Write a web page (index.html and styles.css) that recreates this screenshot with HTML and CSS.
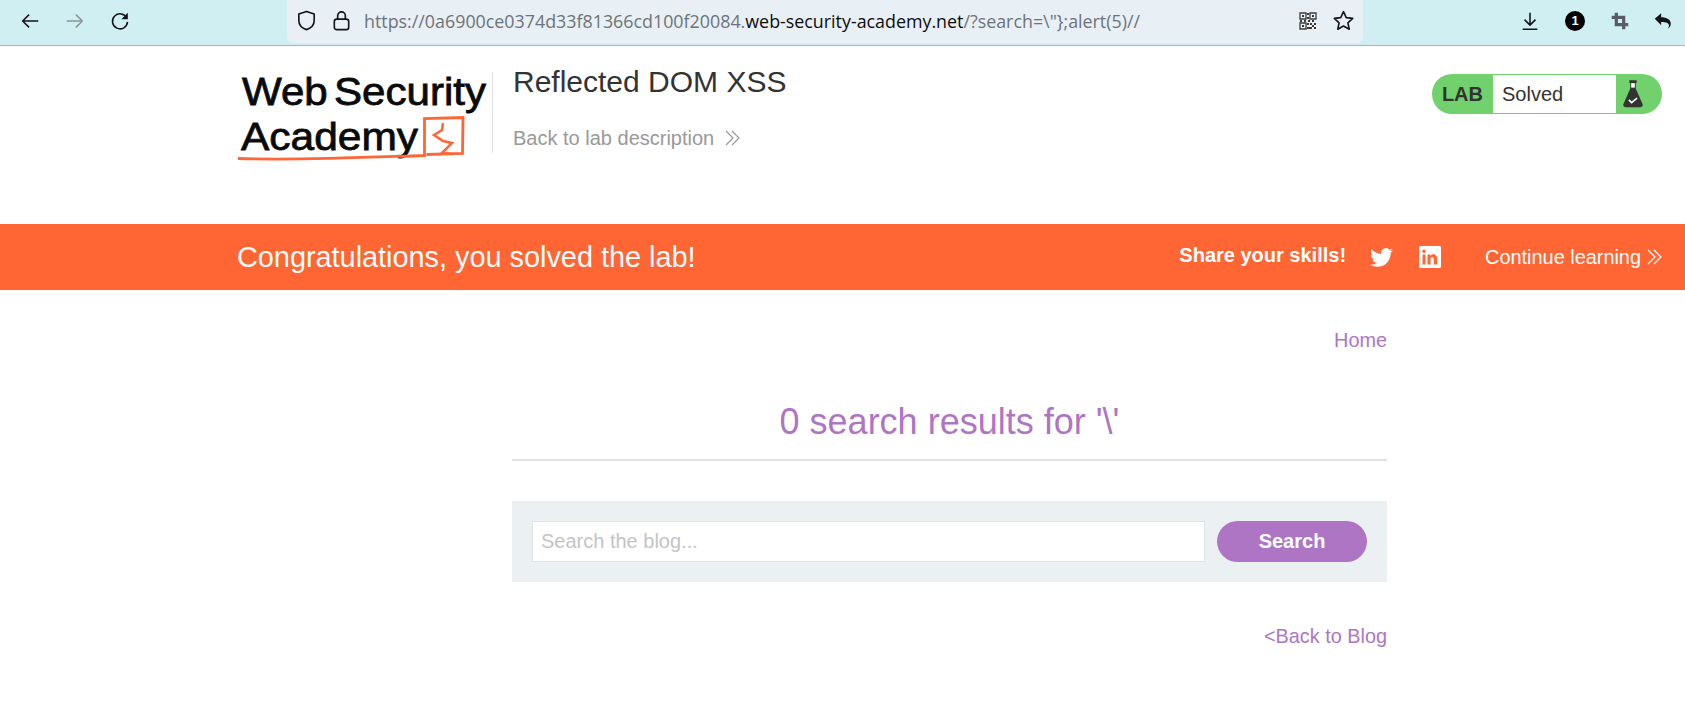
FILE: index.html
```html
<!DOCTYPE html>
<html lang="en">
<head>
<meta charset="utf-8">
<title>Reflected DOM XSS</title>
<link rel="stylesheet" href="styles.css">
</head>
<body>
<div class="toolbar">
  <div class="nav">
    <svg class="ic" viewBox="0 0 24 24"><path d="M21 12H4M11 5l-7 7 7 7" class="st dark"/></svg>
    <svg class="ic" viewBox="0 0 24 24"><path d="M3 12h17M13 5l7 7-7 7" class="st grey"/></svg>
    <svg class="ic" viewBox="0 0 24 24"><path d="M19.5 9A8.2 8.2 0 1 0 20.2 13" class="st dark"/><path d="M20.5 3v7h-7z" class="fill-dark"/></svg>
  </div>
  <div class="urlbar">
    <svg class="ic-s" viewBox="0 0 24 24"><path d="M12 2.5l8 2.8v7c0 4.5-3.3 7.6-8 9.2-4.700-1.600-8-4.700-8-9.200v-7z" class="st dark"/></svg>
    <svg class="ic-s" viewBox="0 0 24 24"><rect x="4.500" y="10.500" width="15" height="11" rx="2.500" class="st dark"/><path d="M8 10.500V7a4 4 0 0 1 8 0v3.500" class="st dark"/></svg>
    <div class="url"><span class="u-dim">https://0a6900ce0374d33f81366cd100f20084.</span><span class="u-main">web-security-academy.net</span><span class="u-dim">/?search=\"};alert(5)//</span></div>
    <svg class="ic-q" viewBox="0 0 18 18"><path d="M1 1h6v6H1zM11 1h6v6h-6zM1 11h6v6H1z" class="st-thin"/><path d="M3 3h2v2H3zM13 3h2v2h-2zM3 13h2v2H3zM8 1h2v2H8zM8 5h2v2H8zM1 8h2v2H1zM5 8h2v2H5zM9 8h2v2H9zM13 8h2v2h-2zM8 11h2v2H8zM11 11h2v2h-2zM15 11h2v2h-2zM13 13h2v2h-2zM8 15h3v2H8zM15 15h2v2h-2zM11 15h2v2h-2z" class="fill-mid"/></svg>
    <svg class="ic-s star" viewBox="0 0 24 24"><path d="M12 2.800l2.900 6.200 6.700.800-5 4.600 1.400 6.700-6-3.400-6 3.400 1.400-6.700-5-4.600 6.700-.800z" class="st dark"/></svg>
  </div>
  <div class="tools">
    <svg class="ic" viewBox="0 0 24 24"><path d="M12 3v13M6 10.500l6 6 6-6M4 21h16" class="st dark"/></svg>
    <div class="count">1</div>
    <svg class="ic crop" viewBox="0 0 24 24"><path d="M8 3v13h13M3 8h13v13" class="st-crop"/></svg>
    <svg class="ic" viewBox="0 0 24 24"><path d="M3 9.500L10 3.500v4.300c6 0 10.500 2.500 10.500 7.200 0 2.300-1.300 4.300-3.500 5.500 1-1.500 1.500-2.500 1.500-3.700 0-2.700-3.200-3.800-8.500-3.800V16.500z" class="fill-dark"/></svg>
  </div>
</div>

<header class="lab-header">
  <svg class="logo" viewBox="236 66 256 100">
    <text x="242" y="105" class="logo-text" textLength="244" lengthAdjust="spacingAndGlyphs">Web Security</text>
    <text x="241" y="150" class="logo-text" textLength="177" lengthAdjust="spacingAndGlyphs">Academy</text>
    <path d="M238 158.500c60 2 125-1 186.500-3V118.500l38.500-1-.5 36-36 1" class="logo-line"/>
    <path d="M443 123l-1 7-8 5 9 6 9 2-10 10 10 1" class="logo-bolt"/>
  </svg>
  <div class="head-title">
    <h2 class="lab-name">Reflected DOM XSS</h2>
    <a class="back-desc">Back to lab description
      <svg class="chev" viewBox="0 0 15 16"><path d="M1 1l7 7-7 7M7 1l7 7-7 7" class="chev-grey"/></svg>
    </a>
  </div>
  <div class="badge">
    <span class="badge-lab">LAB</span>
    <span class="badge-state">Solved</span>
    <span class="badge-icon">
      <svg class="flask" viewBox="0 0 22 32"><path d="M7 1h8v3h-1v6l7.500 17c.6 1.800-.5 3.500-2.500 3.500H3c-2 0-3.100-1.700-2.500-3.500L8 10V4H7z" class="flask-body"/><path d="M9 4h4v5H9z" class="flask-neck"/><path d="M6.500 22.500l3 3 6-5" class="flask-check"/></svg>
    </span>
  </div>
</header>

<section class="banner">
  <h4 class="congrats">Congratulations, you solved the lab!</h4>
  <div class="share">
    <span class="share-text">Share your skills!</span>
    <svg class="tw" viewBox="0 0 24 24"><path d="M23.950 4.570a10 10 0 0 1-2.820.77 4.960 4.960 0 0 0 2.160-2.720c-.950.550-2 .950-3.130 1.180a4.920 4.920 0 0 0-8.380 4.480C7.690 8.100 4.070 6.130 1.640 3.160a4.820 4.820 0 0 0-.66 2.480c0 1.710.87 3.210 2.190 4.100a4.900 4.900 0 0 1-2.230-.62v.06a4.920 4.920 0 0 0 3.950 4.830 5 5 0 0 1-2.210.08 4.940 4.940 0 0 0 4.600 3.420A9.870 9.870 0 0 1 0 19.540a14 14 0 0 0 7.560 2.210c9.050 0 14-7.500 14-13.980 0-.21 0-.42-.02-.63a9.940 9.940 0 0 0 2.410-2.570z" class="fill-white"/></svg>
    <svg class="li" viewBox="0 0 22 22"><path fill-rule="evenodd" d="M1.500 0h19A1.500 1.500 0 0 1 22 1.500v19a1.500 1.500 0 0 1-1.500 1.500h-19A1.500 1.500 0 0 1 0 20.500v-19A1.500 1.500 0 0 1 1.500 0zM3.500 8.500v10h3v-10zM5 3.500a1.800 1.800 0 1 0 0 3.600 1.800 1.800 0 0 0 0-3.600zM8.500 8.500v10h3v-5.200c0-3 3.300-3 3.300 0v5.200h3.200v-6c0-5-4.800-5-6.500-2.500V8.500z" class="fill-white"/></svg>
    <a class="continue">Continue learning
      <svg class="chev" viewBox="0 0 15 16"><path d="M1 1l7 7-7 7M7 1l7 7-7 7" class="chev-white"/></svg>
    </a>
  </div>
</section>

<main class="content">
  <nav class="home-row"><a class="link">Home</a></nav>
  <h1 class="results">0 search results for '\'</h1>
  <form class="search-box">
    <input class="search-input" type="text" placeholder="Search the blog...">
    <button class="search-btn" type="button">Search</button>
  </form>
  <div class="back-row"><a class="link">&lt;Back to Blog</a></div>
</main>
</body>
</html>
```
FILE: styles.css
```css
* { box-sizing: border-box; }
html, body { margin: 0; padding: 0; }
body { background: #fff; font-family: "Liberation Sans", Arial, sans-serif; height: 707px; overflow: hidden; }

.toolbar { height: 46px; background: #d0eff3; border-bottom: 1px solid #9fb9bd; display: flex; align-items: flex-start; }
.nav { width: 287px; display: flex; gap: 23px; padding: 10px 0 0 19px; }
.ic { width: 22px; height: 22px; flex: none; }
.crop { margin-right: -3px; }
.ic-s { width: 23px; height: 23px; flex: none; }
.ic-q { width: 18px; height: 18px; flex: none; margin-left: auto; }
.star { margin: 0 8px 0 3px; }
.st { fill: none; stroke-width: 1.700; stroke-linejoin: round; }
.st-thin { fill: none; stroke: #3a3a3a; stroke-width: 1.300; }
.st-crop { fill: none; stroke: #5b5b66; stroke-width: 3.500; }
.dark { stroke: #15141a; }
.grey { stroke: #8d9698; }
.fill-dark { fill: #15141a; }
.fill-mid { fill: #3a3a3a; }
.fill-white { fill: #fff; }

.urlbar { width: 1076px; height: 43px; background: #e8f0f6; border-radius: 0 0 6px 6px; display: flex; align-items: center; gap: 12px; padding: 0 0 2px 8px; flex: none; }
.url { font-family: "Open Sans", sans-serif; font-size: 17.850px; white-space: nowrap; color: #000; margin-left: -1px; }
.u-dim { color: #6d7478; }
.u-main { color: #0c0c0d; }

.tools { flex: 1; display: flex; align-items: center; justify-content: flex-end; gap: 24px; padding: 10px 11px 0 0; }
.count { width: 20px; height: 20px; border-radius: 50%; background: #000; color: #fff; font: bold 13px/20px "Liberation Sans", sans-serif; text-align: center; }

.lab-header { height: 178px; display: flex; align-items: flex-start; padding: 20px 23px 0 236px; }
.logo { width: 256px; height: 100px; flex: none; overflow: visible; }
.logo-text { font-family: "Liberation Sans", sans-serif; font-size: 39px; font-weight: 400; word-spacing: -5px; fill: #0a0a0a; stroke: #0a0a0a; stroke-width: .8px; }
.logo-line { fill: none; stroke: #ff6633; stroke-width: 2.800; }
.logo-bolt { fill: none; stroke: #ff6633; stroke-width: 2.500; }
.head-title { border-left: 1px solid #dfe2e4; margin-top: 7px; height: 80px; padding-left: 20px; flex: 1; }
.lab-name { margin: -9px 0 0; font-size: 30px; line-height: 36px; font-weight: 400; color: #333332; }
.back-desc { display: flex; align-items: center; gap: 11px; margin-top: 26px; font-size: 20px; line-height: 24px; color: #999; }
.chev { width: 15px; height: 16px; flex: none; }
.chev-grey { fill: none; stroke: #999; stroke-width: 1.200; }
.chev-white { fill: none; stroke: #fff; stroke-width: 1.200; }

.badge { width: 230px; height: 40px; margin-top: 8px; background: #70d16d; border-radius: 20px; display: flex; align-items: stretch; padding: 1px 0; flex: none; }
.badge-lab { width: 61px; font-weight: bold; font-size: 20px; line-height: 38px; color: #333332; text-align: right; padding-right: 10px; }
.badge-state { width: 123px; background: #fff; font-size: 20px; line-height: 38px; color: #333332; padding-left: 9px; }
.badge-icon { flex: 1; display: flex; align-items: center; padding-left: 7px; }
.flask { width: 20px; height: 30px; }
.flask-body { fill: #333332; }
.flask-neck { fill: #fff; }
.flask-check { fill: none; stroke: #fff; stroke-width: 1.800; }

.banner { height: 66px; background: #ff6633; color: #fff; display: flex; align-items: center; justify-content: space-between; padding: 0 23px 0 237px; }
.congrats { margin: 0; font-size: 28.850px; font-weight: 400; }
.share { display: flex; align-items: center; }
.share-text { font-weight: bold; font-size: 20px; margin-right: 24px; position: relative; top: -2px; }
.tw { width: 23px; height: 23px; margin-right: 26px; }
.li { width: 22px; height: 22px; margin-right: 44px; }
.continue { display: flex; align-items: center; gap: 6px; font-size: 19.900px; }

.content { margin: 0 298px 0 512px; }
.home-row { text-align: right; padding-top: 38px; }
.link { font-size: 19.850px; line-height: 24px; color: #ae75c5; }
.results { margin: 47px 0 0; height: 62px; line-height: 46px; font-size: 36px; font-weight: 400; color: #ae75c5; text-align: center; border-bottom: 2px solid #e0e3e6; }
.search-box { margin-top: 40px; height: 81px; background: #ebf0f2; display: flex; align-items: center; padding: 0 20px; gap: 12px; }
.search-input { width: 673px; height: 41px; border: 1px solid #e0e3e6; background: #fff; padding: 0 8px; font: 20px "Liberation Sans", sans-serif; outline: none; }
.search-input::placeholder { color: #c4c4c4; opacity: 1; }
.search-btn { width: 150px; height: 41px; border: 0; border-radius: 21px; background: #ae75c5; color: #fff; font: bold 20px "Liberation Sans", sans-serif; }
.back-row { text-align: right; margin-top: 42px; }
```
